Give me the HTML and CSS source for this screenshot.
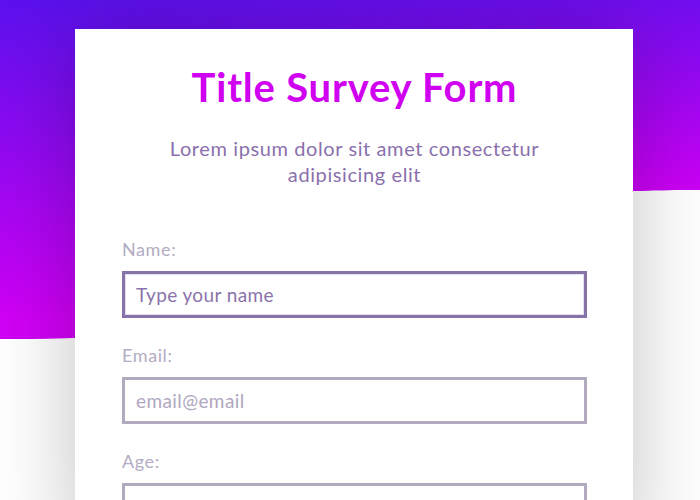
FILE: index.html
```html
<!DOCTYPE html>
<html lang="en">
<head>
<meta charset="utf-8">
<title>Title Survey Form</title>
<link rel="stylesheet" href="styles.css">
</head>
<body>
<svg class="bg" width="700" height="360" viewBox="0 0 700 360" aria-hidden="true">
  <defs>
    <linearGradient id="gl" x1="0" y1="0" x2="0" y2="318" gradientUnits="userSpaceOnUse">
      <stop offset="0" stop-color="#5b11ee"/>
      <stop offset="1" stop-color="#d000f5"/>
    </linearGradient>
    <linearGradient id="gr" x1="0" y1="-44" x2="0" y2="198" gradientUnits="userSpaceOnUse">
      <stop offset="0" stop-color="#5b11ee"/>
      <stop offset="1" stop-color="#d000f5"/>
    </linearGradient>
    <linearGradient id="mh" x1="0" y1="0" x2="1" y2="0">
      <stop offset="0.1" stop-color="#fff" stop-opacity="0"/>
      <stop offset="0.9" stop-color="#fff" stop-opacity="1"/>
    </linearGradient>
    <mask id="m"><rect width="700" height="360" fill="url(#mh)"/></mask>
  </defs>
  <path d="M0 0 H700 V190 C600 189 470 196 350 265 C250 325 150 340 0 339 Z" fill="url(#gl)"/>
  <path d="M0 0 H700 V190 C600 189 470 196 350 265 C250 325 150 340 0 339 Z" fill="url(#gr)" mask="url(#m)"/>
</svg>
<main class="card">
  <h1 class="title">Title Survey Form</h1>
  <p class="intro">Lorem ipsum dolor sit amet consectetur adipisicing elit</p>
  <form class="form">
    <div class="field">
      <label class="label" for="name">Name:</label>
      <input class="input input-active" id="name" type="text" placeholder="Type your name">
    </div>
    <div class="field">
      <label class="label" for="email">Email:</label>
      <input class="input" id="email" type="email" placeholder="email@email">
    </div>
    <div class="field">
      <label class="label" for="age">Age:</label>
      <input class="input" id="age" type="number">
    </div>
  </form>
</main>
</body>
</html>
```
FILE: styles.css
```css
html, body {
  margin: 0;
  padding: 0;
  background: #ffffff;
}

body {
  position: relative;
  font-family: "Lato", "Open Sans", sans-serif;
  min-height: 600px;
}

.bg {
  position: absolute;
  left: 0;
  top: 0;
  display: block;
}

.card {
  position: relative;
  width: 558px;
  box-sizing: border-box;
  margin: 29px 0 0 75px;
  padding: 34px 46px 20px 47px;
  background: #ffffff;
  box-shadow: 0 0 80px rgba(0, 0, 0, 0.24);
}

.title {
  margin: 0;
  font-size: 40px;
  line-height: 48px;
  font-weight: 700;
  letter-spacing: 0.8px;
  color: #d000f0;
  text-align: center;
}

.intro {
  margin: 24px 10px 0;
  font-size: 20px;
  line-height: 26px;
  letter-spacing: 0.6px;
  color: #8a70ac;
  text-align: center;
}

.form {
  margin-top: 50px;
  display: flex;
  flex-direction: column;
  gap: 25px;
}

.field {
  display: flex;
  flex-direction: column;
  gap: 10px;
}

.label {
  font-size: 18px;
  line-height: 24px;
  letter-spacing: 0.6px;
  color: #b3abc3;
}

.input {
  width: 465px;
  height: 47px;
  box-sizing: border-box;
  margin: 0;
  padding: 0 11px;
  border: 3px solid #b2aabf;
  border-radius: 0;
  background: #ffffff;
  font-family: inherit;
  font-size: 19px;
  letter-spacing: 0.4px;
  color: #8a73aa;
  outline: none;
}

.input::placeholder {
  color: #b0a7bf;
}

.input-active {
  border-color: #8873a8;
  box-shadow: inset 0 0 0 1px #e4dff0;
}

.input-active::placeholder {
  color: #8a73aa;
}
```
